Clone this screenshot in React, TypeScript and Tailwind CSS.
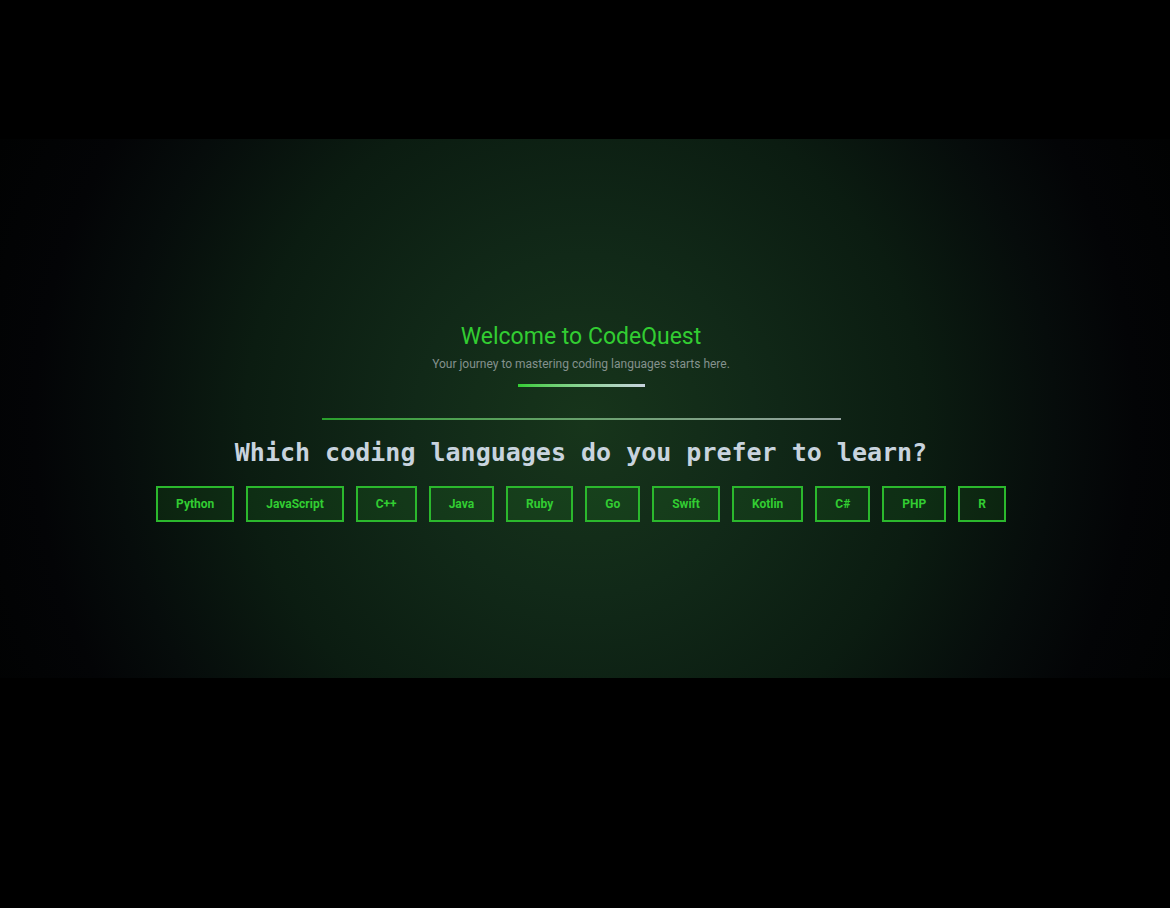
const languages = ["Python", "JavaScript", "C++", "Java", "Ruby", "Go", "Swift", "Kotlin", "C#", "PHP", "R"];

export default function App() {
  return (
    <div className="min-h-screen bg-black pt-[139px] font-['Roboto',sans-serif]">
      <main className="flex flex-col items-center bg-[radial-gradient(circle_at_50%_53%,#17351b_0px,#112918_170px,#0b1c11_340px,#060c0b_470px,#030406_550px,#010202_650px)] pt-[184px] pr-2 pb-[156px]">
        <header className="flex flex-col items-center">
          <h1 className="text-[23px] leading-7 text-[#32cd32]">Welcome to CodeQuest</h1>
          <p className="mt-1 text-xs leading-[18px] text-[#84918d]">Your journey to mastering coding languages starts here.</p>
          <div className="mt-[11px] h-[3px] w-[127px] bg-linear-to-r from-[#32cd32] to-[#c8d3de]" />
        </header>
        <div className="mt-[31px] h-[2px] w-[519px] max-w-full bg-linear-to-r from-[#289f2b] to-[#94a19f]" />
        <h2 className="mt-[18px] text-center font-['DejaVu_Sans_Mono',monospace] text-[25px] leading-[30px] font-bold text-[#c8d3de]">
          Which coding languages do you prefer to learn?
        </h2>
        <div className="mt-[18px] flex flex-wrap justify-center gap-3">
          {languages.map((language) => (
            <button key={language} type="button" className="h-9 cursor-pointer border-2 border-[#2bb82d] bg-[#32cd32]/10 px-[18px] text-xs font-bold text-[#32cd32]">
              {language}
            </button>
          ))}
        </div>
      </main>
    </div>
  );
}
